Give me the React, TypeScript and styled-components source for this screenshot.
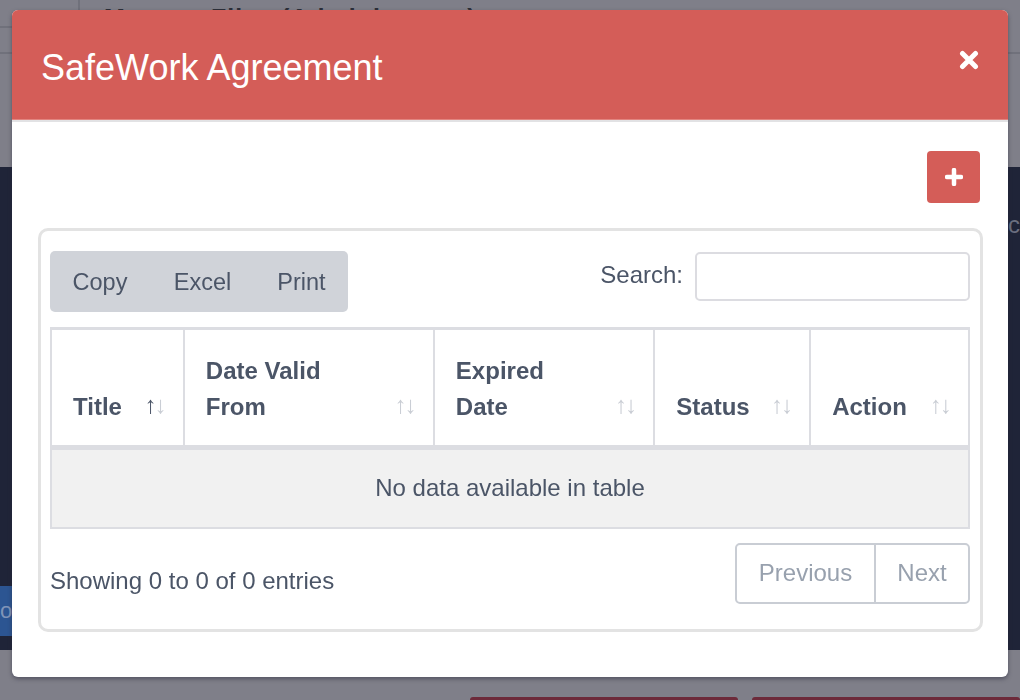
import React from "react";
import styled, { createGlobalStyle } from "styled-components";

const Global = createGlobalStyle`
  html, body { margin: 0; padding: 0; }
  body {
    font-family: "Liberation Sans", Arial, Helvetica, sans-serif;
    background: #7f7f89;
    width: 1020px;
    height: 700px;
    overflow: hidden;
  }
  * { box-sizing: border-box; }
`;

/* ---------- dimmed page behind the modal ---------- */
const Page = styled.div`
  width: 1020px;
  height: 700px;
  display: flex;
  flex-direction: column;
  background: #7f7f89;
`;

const TopBar = styled.div`
  height: 54px;
  display: flex;
  align-items: flex-start;
  border-bottom: 2px solid #70717b;
`;

const Toggle = styled.div`
  width: 80px;
  height: 28px;
  border-right: 2px solid #70717b;
  border-bottom: 2px solid #70717b;
  color: #33363f;
  font-size: 14px;
  display: flex;
  align-items: center;
  justify-content: flex-end;
  padding-right: 14px;
`;

const PageTitle = styled.div`
  padding: 4px 0 0 24px;
  color: #2b2e38;
  font-weight: 700;
  font-size: 25px;
  letter-spacing: 1px;
`;

const SubBar = styled.div`
  height: 113px;
`;

const Main = styled.div`
  flex: 1;
  background: #1f2438;
  display: flex;
  align-items: flex-end;
  justify-content: space-between;
  padding-bottom: 14px;
`;

const SideButton = styled.div`
  width: 60px;
  height: 50px;
  background: #2c5592;
  color: #8094b8;
  font-size: 22px;
  display: flex;
  align-items: center;
`;

const SideText = styled.div`
  align-self: flex-start;
  margin-top: 44px;
  color: #6b6f80;
  font-size: 24px;
`;

const FooterBar = styled.div`
  height: 50px;
  display: flex;
  align-items: flex-end;
  gap: 14px;
  padding-left: 470px;
`;

const FooterBtn = styled.div`
  width: 280px;
  height: 3px;
  background: #6d2a3a;
  border-radius: 3px 3px 0 0;
`;

/* ---------- modal ---------- */
const Overlay = styled.div`
  position: fixed;
  inset: 0;
  padding: 10px 12px 23px 12px;
  display: flex;
`;

const Modal = styled.div`
  flex: 1;
  background: #fff;
  border-radius: 6px;
  overflow: hidden;
  box-shadow: 0 2px 4px rgba(40, 40, 60, 0.5);
  display: flex;
  flex-direction: column;
`;

const Header = styled.div`
  height: 112px;
  background: #d45d58;
  border-bottom: 2px solid #e2e2e4;
  box-shadow: inset 0 -1px 0 #e28580;
  display: flex;
  align-items: center;
  justify-content: space-between;
  padding: 0 28px 0 29px;
`;

const Title = styled.h1`
  margin: 0;
  color: #fff;
  font-weight: 400;
  font-size: 36px;
  padding-top: 5px;
`;

const Close = styled.button`
  border: 0;
  background: transparent;
  padding: 0;
  width: 22px;
  height: 22px;
  display: flex;
  align-items: center;
  justify-content: center;
  margin-top: -10px;
`;

const Body = styled.div`
  flex: 1;
  padding: 29px 28px 45px 26px;
  display: flex;
  flex-direction: column;
`;

const AddRow = styled.div`
  display: flex;
  justify-content: flex-end;
  margin-bottom: 25px;
`;

const AddButton = styled.button`
  width: 53px;
  height: 52px;
  border: 0;
  border-radius: 4px;
  background: #d45d58;
  display: flex;
  align-items: center;
  justify-content: center;
  padding: 0;
`;

const Panel = styled.div`
  flex: 1;
  margin-right: -3px;
  border: 3px solid #e3e3e3;
  border-radius: 10px;
  padding: 20px 10px 25px 9px;
  display: flex;
  flex-direction: column;
`;

const Toolbar = styled.div`
  display: flex;
  justify-content: space-between;
  align-items: flex-start;
  margin-bottom: 15px;
`;

const BtnGroup = styled.div`
  display: flex;
  background: #d0d3d9;
  border-radius: 5px;
  height: 61px;
`;

const GroupBtn = styled.button<{ $w: number }>`
  width: ${(p) => p.$w}px;
  border: 0;
  background: transparent;
  color: #4b5567;
  font-family: inherit;
  font-size: 23.5px;
  padding: 2px 0 0;
  display: flex;
  align-items: center;
  justify-content: center;
`;

const SearchWrap = styled.label`
  display: flex;
  align-items: center;
  gap: 12px;
  color: #4b5567;
  font-size: 24px;
  padding-top: 1px;
`;

const SearchLabel = styled.span`
  margin-top: -4px;
`;

const SearchInput = styled.input`
  width: 275px;
  height: 49px;
  border: 2px solid #dcdce1;
  border-radius: 5px;
  outline: none;
`;

const Table = styled.table`
  width: 100%;
  border-collapse: collapse;
  border: 2px solid #dcdde2;
  border-top-width: 3px;
`;

const Th = styled.th<{ $w: number }>`
  width: ${(p) => p.$w}px;
  height: 119px;
  border-left: 2px solid #dcdde2;
  border-bottom: 5px solid #dcdde2;
  padding: 0 16px 0 21px;
  text-align: left;
  vertical-align: bottom;
  color: #4b5567;
  font-size: 24px;
  font-weight: 700;
  line-height: 36px;
  &:first-child { border-left: 0; }
`;

const ThInner = styled.div`
  display: flex;
  align-items: flex-end;
  justify-content: space-between;
  padding-bottom: 20px;
`;

const Sort = styled.span`
  display: inline-flex;
  font-weight: 400;
  font-size: 24px;
  line-height: 36px;
  flex-shrink: 0;
  margin-bottom: 2px;
  margin-right: 2px;
`;

const Arrow = styled.span<{ $on?: boolean }>`
  color: ${(p) => (p.$on ? "#4b5567" : "#c9cdd4")};
  letter-spacing: -2px;
`;

const EmptyCell = styled.td`
  height: 80px;
  background: #f1f1f1;
  text-align: center;
  color: #4b5567;
  font-size: 24px;
`;

const Footer = styled.div`
  display: flex;
  justify-content: space-between;
  align-items: center;
  margin-top: 14px;
`;

const Info = styled.div`
  color: #4b5567;
  font-size: 24px;
  padding-top: 16px;
`;

const Pager = styled.div`
  display: flex;
  border: 2px solid #c9cdd4;
  border-radius: 5px;
  height: 61px;
`;

const PageBtn = styled.button<{ $w: number }>`
  width: ${(p) => p.$w}px;
  border: 0;
  background: transparent;
  color: #98a1ae;
  font-family: inherit;
  font-size: 24px;
  padding: 0;
  & + & { border-left: 2px solid #c9cdd4; }
`;

const SortIcon = ({ on }: { on?: boolean }) => (
  <Sort>
    <Arrow $on={on}>↑</Arrow>
    <Arrow>↓</Arrow>
  </Sort>
);

const columns: { label: React.ReactNode; w: number; on?: boolean }[] = [
  { label: "Title", w: 133, on: true },
  { label: <>Date Valid<br />From</>, w: 251 },
  { label: <>Expired<br />Date</>, w: 221 },
  { label: "Status", w: 156 },
  { label: "Action", w: 159 },
];

export default function App() {
  return (
    <>
      <Global />
      <Page>
        <TopBar>
          <Toggle>▼</Toggle>
          <PageTitle>Manage Files (Administrator)</PageTitle>
        </TopBar>
        <SubBar />
        <Main>
          <SideButton>ory</SideButton>
          <SideText>nc</SideText>
        </Main>
        <FooterBar>
          <FooterBtn />
          <FooterBtn />
        </FooterBar>
      </Page>
      <Overlay>
        <Modal>
          <Header>
            <Title>SafeWork Agreement</Title>
            <Close aria-label="Close">
              <svg width="20" height="20" viewBox="0 0 20 20">
                <path d="M3.5 3.5 L16.5 16.5 M16.5 3.5 L3.5 16.5" stroke="#fff" strokeWidth="5" strokeLinecap="round" />
              </svg>
            </Close>
          </Header>
          <Body>
            <AddRow>
              <AddButton aria-label="Add">
                <svg width="18" height="18" viewBox="0 0 18 18">
                  <path d="M9 2 V16 M2 9 H16" stroke="#fff" strokeWidth="4.5" strokeLinecap="round" />
                </svg>
              </AddButton>
            </AddRow>
            <Panel>
              <Toolbar>
                <BtnGroup>
                  <GroupBtn $w={100}>Copy</GroupBtn>
                  <GroupBtn $w={105}>Excel</GroupBtn>
                  <GroupBtn $w={93}>Print</GroupBtn>
                </BtnGroup>
                <SearchWrap>
                  <SearchLabel>Search:</SearchLabel>
                  <SearchInput type="search" />
                </SearchWrap>
              </Toolbar>
              <Table>
                <thead>
                  <tr>
                    {columns.map((c, i) => (
                      <Th key={i} $w={c.w}>
                        <ThInner>
                          <span>{c.label}</span>
                          <SortIcon on={c.on} />
                        </ThInner>
                      </Th>
                    ))}
                  </tr>
                </thead>
                <tbody>
                  <tr>
                    <EmptyCell colSpan={5}>No data available in table</EmptyCell>
                  </tr>
                </tbody>
              </Table>
              <Footer>
                <Info>Showing 0 to 0 of 0 entries</Info>
                <Pager>
                  <PageBtn $w={137}>Previous</PageBtn>
                  <PageBtn $w={94}>Next</PageBtn>
                </Pager>
              </Footer>
            </Panel>
          </Body>
        </Modal>
      </Overlay>
    </>
  );
}
